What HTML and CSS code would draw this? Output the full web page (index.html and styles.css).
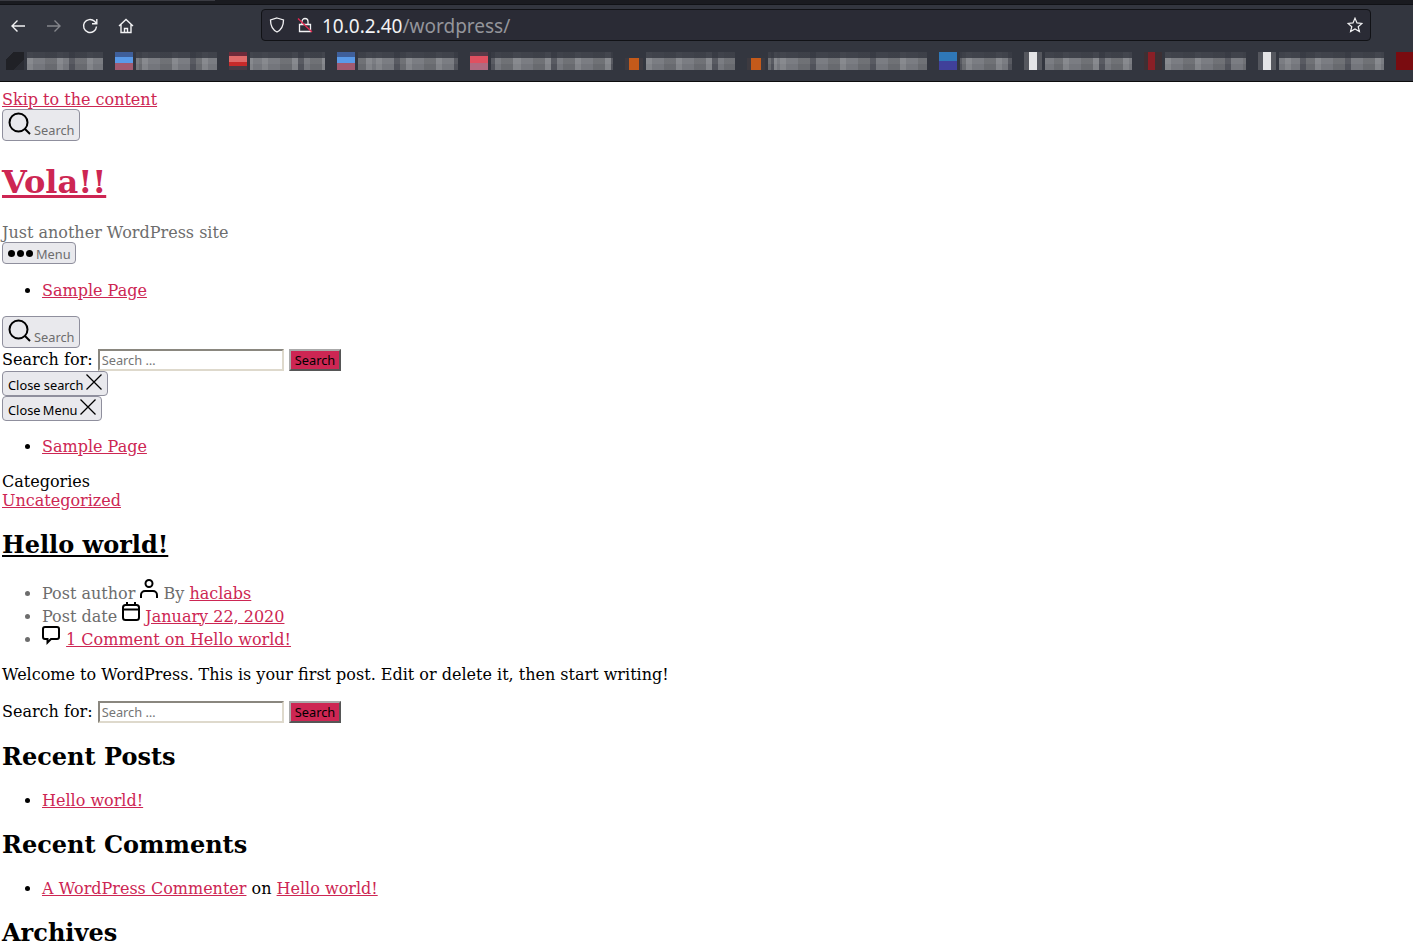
FILE: index.html
```html
<!DOCTYPE html>
<html lang="en">

<head>
    <meta charset="UTF-8">
    <meta name="viewport" content="width=device-width, initial-scale=1.0">
    <title>Vola!!</title>
    <link rel="stylesheet" href="styles.css">
</head>

<body>
    <div class="browser">
        <div class="tab-strip"><div class="tab-edge"></div></div>
        <div class="nav-bar">
            <svg class="nav-icon" viewBox="0 0 16 16"><path d="M15 8H2M7.500 2.500 2 8l5.500 5.500"/></svg>
            <svg class="nav-icon dim" viewBox="0 0 16 16"><path d="M1 8H14M8.500 2.500 14 8l-5.500 5.500"/></svg>
            <svg class="nav-icon" viewBox="0 0 16 16"><path d="M14.500 8.500A6.500 6.500 0 1 1 12.500 3.300L14.500 5.500M14.800 1v4.800H10"/></svg>
            <svg class="nav-icon" viewBox="0 0 16 16"><path d="M1 8 8 1.500 15 8M3 6.500V14.500H13V6.500M6.500 14.500V10.500h3v4"/></svg>
            <div class="url-bar">
                <svg class="url-icon" viewBox="0 0 16 16"><path d="M8 1 14.500 3c0 6-1.500 9.500-6.500 12C3 12.500 1.500 9 1.500 3z"/></svg>
                <svg class="url-icon lock" viewBox="0 0 16 16"><path d="M5 7V4.500a3 3 0 0 1 6 0V7M2.500 7.500h11v7h-11z"/><path class="slash" d="M1 1.500 15 15"/></svg>
                <span class="url"><span class="host">10.0.2.40</span>/wordpress/</span>
                <svg class="star" viewBox="0 0 16 16"><path d="M8 1.200 10 5.900l5 .5-3.800 3.300 1.200 4.900L8 12l-4.400 2.600 1.200-4.900L1 6.400l5-.5z"/></svg>
            </div>
        </div>
        <div class="bookmarks">
            <span class="fav fav-dark"></span><span class="mark m-1"></span>
            <span class="fav fav-blue"></span><span class="mark m-2"></span>
            <span class="fav fav-red"></span><span class="mark m-3"></span>
            <span class="fav fav-blue"></span><span class="mark m-4"></span>
            <span class="fav fav-pink"></span><span class="mark m-5"></span>
            <span class="fav fav-orange"></span><span class="mark m-6"></span>
            <span class="fav fav-orange"></span><span class="mark m-7"></span>
            <span class="fav fav-indigo"></span><span class="mark m-8"></span>
            <span class="fav fav-white"></span><span class="mark m-9"></span>
            <span class="fav fav-maroon"></span><span class="mark m-10"></span>
            <span class="fav fav-white"></span><span class="mark m-11"></span>
            <span class="fav fav-deep"></span>
        </div>
    </div>

    <div class="page">
        <a href="#">Skip to the content</a>
        <div>
            <button class="toggle">
                <svg class="search-icon" viewBox="0 0 23 23"><circle cx="10.500" cy="10.500" r="9"/><path d="M17 17l5 5"/></svg>
                <span>Search</span>
            </button>
        </div>

        <h1 class="site-title"><a href="#">Vola!!</a></h1>
        <div class="tagline">Just another WordPress site</div>
        <div>
            <button class="toggle small">
                <span class="dots"><i></i><i></i><i></i></span>
                <span>Menu</span>
            </button>
        </div>

        <ul class="menu-list">
            <li><a href="#">Sample Page</a></li>
        </ul>

        <div>
            <button class="toggle">
                <svg class="search-icon" viewBox="0 0 23 23"><circle cx="10.500" cy="10.500" r="9"/><path d="M17 17l5 5"/></svg>
                <span>Search</span>
            </button>
        </div>
        <form class="search-form">
            <label>Search for: </label>
            <input type="text" placeholder="Search …">
            <input type="submit" value="Search">
        </form>
        <div>
            <button class="toggle close">Close search
                <svg class="x-icon" viewBox="0 0 16 16"><path d="M.5.500l15 15M15.500.500l-15 15"/></svg>
            </button>
        </div>
        <div>
            <button class="toggle close close-menu">Close Menu
                <svg class="x-icon" viewBox="0 0 16 16"><path d="M.5.500l15 15M15.500.500l-15 15"/></svg>
            </button>
        </div>

        <ul>
            <li><a href="#">Sample Page</a></li>
        </ul>

        <div>Categories</div>
        <div><a href="#">Uncategorized</a></div>

        <h2 class="post-title"><a href="#">Hello world!</a></h2>

        <ul class="post-meta">
            <li>Post author
                <svg class="meta-icon" viewBox="0 1 18 19"><circle cx="9" cy="4.500" r="3.500"/><path d="M1 19v-3a4 4 0 0 1 4-4h8a4 4 0 0 1 4 4v3"/></svg>
                By <a href="#">haclabs</a></li>
            <li>Post date
                <svg class="meta-icon" viewBox="0 1 18 19"><rect x="1" y="3" width="16" height="15" rx="2.500"/><path d="M1 7.500h16M5 0v3M13 0v3"/></svg>
                <a href="#">January 22, 2020</a></li>
            <li>
                <svg class="meta-icon comment-icon" viewBox="0 1 18 19"><path d="M3 2h12a2 2 0 0 1 2 2v8a2 2 0 0 1-2 2H9l-3.500 3.500V14H3a2 2 0 0 1-2-2V4a2 2 0 0 1 2-2z"/></svg>
                <a href="#">1 Comment on Hello world!</a></li>
        </ul>

        <p>Welcome to WordPress. This is your first post. Edit or delete it, then start writing!</p>

        <form class="search-form">
            <label>Search for: </label>
            <input type="text" placeholder="Search …">
            <input type="submit" value="Search">
        </form>

        <h2>Recent Posts</h2>
        <ul>
            <li><a href="#">Hello world!</a></li>
        </ul>

        <h2>Recent Comments</h2>
        <ul>
            <li><a href="#">A WordPress Commenter</a> on <a href="#">Hello world!</a></li>
        </ul>

        <h2>Archives</h2>
    </div>
</body>

</html>
```

FILE: styles.css
```css
html {
    overflow: hidden;
}

body {
    margin: 0;
    height: 944px;
    overflow: hidden;
    background-color: #fff;
    font-family: "DejaVu Serif", serif;
    font-size: 16px;
    color: #000;
}

/* browser chrome */
.browser {
    height: 82px;
    background-color: #33363f;
    border-bottom: 1px solid #0c0c0d;
    box-sizing: border-box;
}

.tab-strip {
    height: 5px;
    box-sizing: border-box;
    background-color: #1a1b20;
    border-bottom: 1px solid #111216;
}

.tab-edge {
    width: 215px;
    height: 1px;
    background-color: #3a3b42;
}

.nav-bar {
    height: 40px;
    display: flex;
    align-items: center;
    padding-left: 10px;
    padding-right: 42px;
}

.nav-icon {
    width: 16px;
    height: 16px;
    margin-top: 2px;
    margin-right: 20px;
    fill: none;
    stroke: #f2f2f4;
    stroke-width: 1.4;
    flex: none;
}

.nav-icon.dim {
    stroke: #85868c;
}

.url-bar {
    flex: 1;
    height: 32px;
    margin-left: 107px;
    display: flex;
    align-items: center;
    box-sizing: border-box;
    padding: 0 7px;
    background-color: #2a2b35;
    border: 1px solid #111216;
    border-radius: 4px;
}

.url-icon {
    width: 16px;
    height: 16px;
    margin-right: 12px;
    fill: none;
    stroke: #f2f2f4;
    stroke-width: 1.300;
    flex: none;
}

.url-icon .slash {
    stroke: #e22850;
}

.url {
    flex: 1;
    margin-left: -3px;
    padding-top: 2px;
    font-family: "Noto Sans", sans-serif;
    font-size: 19px;
    color: #94959b;
}

.host {
    color: #f2f2f4;
}

.star {
    width: 16px;
    height: 16px;
    fill: none;
    stroke: #f2f2f4;
    stroke-width: 1.200;
    flex: none;
}

.bookmarks {
    height: 36px;
    box-sizing: border-box;
    display: flex;
    align-items: flex-start;
    padding-top: 7px;
    padding-left: 6px;
    overflow: hidden;
}

.fav {
    width: 18px;
    height: 18px;
    flex: none;
    margin-right: 3px;
}

/* blurred bookmark labels, mosaic made of overlapping periods */
.mark {
    height: 18px;
    flex: none;
    margin-right: 12px;
    background-color: #74767c;
    background-image:
        linear-gradient(180deg, rgba(51, 54, 63, .8) 0 6px, rgba(255, 255, 255, .05) 6px 12px, transparent 12px),
        repeating-linear-gradient(90deg, transparent 0 36px, #50525a 36px 42px, transparent 42px 60px),
        repeating-linear-gradient(90deg, rgba(255, 255, 255, .1) 0 6px, transparent 6px 18px, rgba(0, 0, 0, .1) 18px 30px);
}

.m-1 { width: 76px; background-position: 0 0, 6px 0, 0 0; }
.m-2 { width: 81px; background-position: 0 0, 18px 0, 6px 0; }
.m-3 { width: 75px; background-position: 0 0, 12px 0, 12px 0; }
.m-4 { width: 100px; background-position: 0 0, 0 0, 18px 0; }
.m-5 { width: 122px; background-position: 0 0, 24px 0, 24px 0; }
.m-6 { width: 89px; background-position: 0 0, 30px 0, 0 0; }
.m-7 { width: 159px; background-position: 0 0, 6px 0, 12px 0; }
.m-8 { width: 52px; background-position: 0 0, 12px 0, 6px 0; }
.m-9 { width: 87px; background-position: 0 0, 18px 0, 18px 0; }
.m-10 { width: 81px; background-position: 0 0, 24px 0, 0 0; }
.m-11 { width: 105px; background-position: 0 0, 30px 0, 6px 0; }

.fav-dark { background: linear-gradient(135deg, #33363f 20%, #202126 20% 70%, #2a2c33 70%); }
.fav-blue { background: linear-gradient(180deg, #3f5f9a 30%, #5a9ae8 30% 60%, #a05a70 60%); }
.fav-red { background: linear-gradient(180deg, #6f2a3a 25%, #e06a6a 25% 55%, #c82a2a 55% 80%, #4a3a44 80%); }
.fav-pink { background: linear-gradient(180deg, #5a3a48 25%, #e05060 25% 60%, #b06a80 60%); }
.fav-orange { background: linear-gradient(180deg, #33363f 33%, transparent 33%), linear-gradient(90deg, #3d3a40 20%, #c45a1a 20% 80%, #3d3a40 80%); }
.fav-indigo { background: linear-gradient(180deg, #2f78b8 50%, #40409a 50%); }
.fav-white { background: linear-gradient(90deg, #55575e 30%, #e4e4e6 30% 70%, #55575e 70%); }
.fav-maroon { background: linear-gradient(90deg, #3d3034 20%, #8a1f26 20% 60%, #3d3034 60%); }
.fav-deep { background-color: #7a0c10; }

/* page content */
.page {
    padding: 8px 2px 0;
}

a {
    color: #cd2653;
}

button,
input {
    font-family: "Noto Sans", sans-serif;
    font-size: 12.800px;
}

.toggle {
    display: inline-flex;
    align-items: flex-end;
    vertical-align: top;
    padding: 2px 4px 1px 5px;
    height: 32px;
    background-color: #e9e9ed;
    border: 1px solid #8f8f9d;
    border-radius: 4px;
    color: #6d6d6d;
}

.search-icon {
    width: 23px;
    height: 23px;
    margin-right: 3px;
    margin-bottom: 4px;
    fill: none;
    stroke: #000;
    stroke-width: 2;
}

.toggle.small {
    height: 22px;
    align-items: center;
}

.dots {
    display: flex;
    gap: 2px;
    margin-right: 3px;
}

.dots i {
    width: 7px;
    height: 7px;
    border-radius: 50%;
    background-color: #000;
}

.toggle.close {
    height: 25px;
    padding-right: 5px;
    color: #000;
}

.toggle.close-menu {
    word-spacing: -1px;
}

.x-icon {
    width: 16px;
    height: 16px;
    margin-left: 3px;
    margin-bottom: 4px;
    fill: none;
    stroke: #000;
    stroke-width: 1.300;
}

.site-title {
    font-size: 32px;
    margin: 22px 0;
}

.tagline {
    color: #6d6d6d;
}

ul {
    margin: 16px 0;
    padding-left: 40px;
}

.menu-list {
    margin-top: 17px;
}

.search-form {
    height: 22px;
    padding-top: 1px;
}

.search-form input[type="text"] {
    width: 178px;
    height: 18px;
    padding: 0 2px;
    box-sizing: content-box;
    border: 2px inset #ded9cc;
    color: #000;
}

.search-form input[type="submit"] {
    height: 22px;
    padding: 0 4px;
    background-color: #cd2653;
    border: 2px outset #aaa;
    color: #000;
}

.post-title {
    margin-bottom: 20.600px;
}

.post-title a {
    color: #000;
}

h2 {
    font-size: 24px;
    margin: 19.920px 0;
}

.post-meta {
    color: #6d6d6d;
}

.meta-icon {
    width: 18px;
    height: 19px;
    overflow: visible;
    fill: none;
    stroke: #000;
    stroke-width: 2;
}

.comment-icon {
    margin-right: 1px;
}

p {
    margin: 16px 0;
}
```
